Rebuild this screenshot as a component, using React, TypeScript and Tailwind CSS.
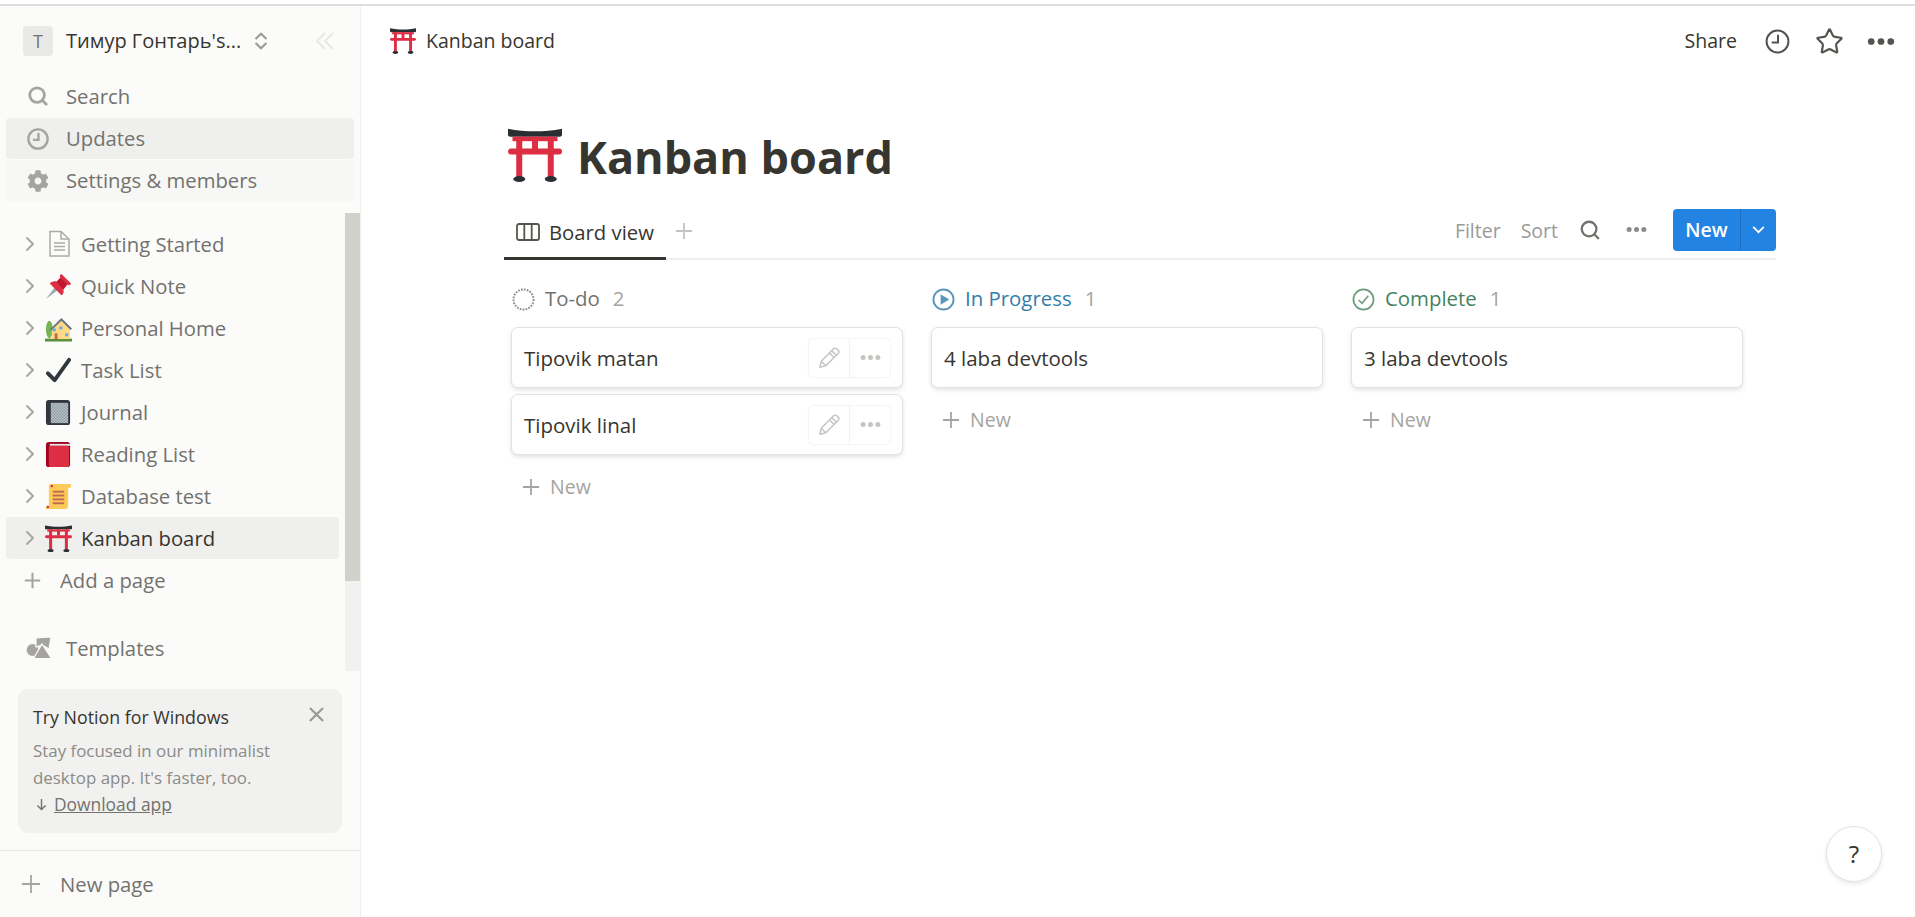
import React from 'react';
import { ChevronRight, Search, Star } from 'lucide-react';
import { FaCog } from 'react-icons/fa';

const Torii = ({ className }: { className: string }) => (
  <svg viewBox="0 0 36 36" className={className}>
    <path d="M0 0.500C6 1.800 12 2.200 18 2.200S30 1.800 36 0.500V4.500C36 5.200 35.500 5.800 34.500 5.800H1.500C0.500 5.800 0 5.200 0 4.500Z" fill="#292f33" />
    <rect x="5.500" y="5.800" width="4" height="27" fill="#dd2e44" />
    <rect x="26.500" y="5.800" width="4" height="27" fill="#dd2e44" />
    <rect x="16" y="5.800" width="4" height="8.500" fill="#dd2e44" />
    <rect x="3" y="5.800" width="30" height="3" fill="#dd2e44" />
    <rect x="0" y="13.700" width="36" height="3.900" rx="1.950" fill="#dd2e44" />
    <ellipse cx="7.500" cy="34" rx="4" ry="2" fill="#292f33" />
    <ellipse cx="28.500" cy="34" rx="4" ry="2" fill="#292f33" />
  </svg>
);

const DocIcon = () => (
  <svg viewBox="0 0 26 28" className="w-[26px] h-[28px]" fill="none" stroke="#aaaaa6" strokeWidth="1.500">
    <path d="M4 1.500H15L23 9V26H4Z" />
    <path d="M15 1.500V9H23M8 13H19M8 16.500H19M8 20H19" />
  </svg>
);

const PinIcon = () => (
  <svg viewBox="0 0 28 28" className="w-[27px] h-[27px]">
    <path d="M1 27L10 15L13 18Z" fill="#99aab5" />
    <path d="M17 1L27 11C26 13 24 13 23 12L19 17C20 20 19 22 17 23L5 11C7 9 9 8 12 9L16 5C15 4 15 2 17 1Z" fill="#dd2e44" />
    <path d="M16 5L23 12L19 17L12 9Z" fill="#be1931" />
  </svg>
);

const HouseIcon = () => (
  <svg viewBox="0 0 28 28" className="w-[27px] h-[27px]">
    <ellipse cx="4.500" cy="15" rx="3.500" ry="9" fill="#77b255" />
    <rect x="0" y="24.500" width="28" height="3" fill="#5c913b" />
    <path d="M7 14L17 5L26 14V25H7Z" fill="#ffd983" />
    <path d="M5 15L17 3L28 14L26.500 15.500L17 6L6.500 16Z" fill="#66757f" />
    <rect x="10" y="19" width="3" height="6" fill="#c1694f" />
    <rect x="8" y="14" width="3" height="3" fill="#55acee" />
    <rect x="15" y="12" width="3" height="3" fill="#55acee" />
    <rect x="21" y="19" width="3" height="3" fill="#55acee" />
  </svg>
);

const CheckIcon = () => (
  <svg viewBox="0 0 28 28" className="w-[27px] h-[27px]" fill="none">
    <path d="M3 17L10 24L25 3" stroke="#31373d" strokeWidth="4" strokeLinecap="round" strokeLinejoin="round" />
  </svg>
);

const NotebookIcon = () => (
  <svg viewBox="0 0 28 28" className="w-[27px] h-[27px]">
    <defs>
      <pattern id="checker" width="3" height="3" patternUnits="userSpaceOnUse">
        <rect width="3" height="3" fill="#e1e8ed" />
        <rect width="1.500" height="1.500" fill="#66757f" />
        <rect x="1.500" y="1.500" width="1.500" height="1.500" fill="#66757f" />
      </pattern>
    </defs>
    <rect x="1" y="1" width="25" height="26" rx="3" fill="#31373d" />
    <rect x="6" y="4" width="18" height="21" fill="url(#checker)" />
  </svg>
);

const BookIcon = () => (
  <svg viewBox="0 0 28 28" className="w-[27px] h-[27px]">
    <rect x="1" y="1" width="25" height="26" rx="3" fill="#a0041e" />
    <rect x="5" y="3" width="21" height="2" fill="#e1e8ed" />
    <rect x="4" y="5" width="21" height="22" rx="2" fill="#dd2e44" />
  </svg>
);

const ScrollIcon = () => (
  <svg viewBox="0 0 28 28" className="w-[27px] h-[27px]">
    <path d="M6 1H26C27.500 1 27.500 5 26 5H24V24C24 26 22 27 20 27H2C0.500 27 0.500 23.500 2 23.500H4V4C4 2 5 1 6 1Z" fill="#fdcb58" />
    <rect x="8" y="8" width="12" height="2" fill="#c1694f" />
    <rect x="8" y="12" width="12" height="2" fill="#c1694f" />
    <rect x="8" y="16" width="12" height="2" fill="#c1694f" />
    <rect x="8" y="20" width="12" height="2" fill="#c1694f" />
    <circle cx="7" cy="3" r="1.300" fill="#dd2e44" />
    <circle cx="3" cy="25" r="1.300" fill="#dd2e44" />
  </svg>
);

const PlusIcon = ({ className, color = '#a5a4a0', width = 2.2 }: { className: string; color?: string; width?: number }) => (
  <svg viewBox="0 0 20 20" className={className} fill="none" stroke={color} strokeWidth={width}>
    <path d="M10 1V19M1 10H19" />
  </svg>
);

const Dots = ({ className, color }: { className: string; color: string }) => (
  <svg viewBox="0 0 20 6" className={className} fill={color}>
    <circle cx="3" cy="3" r="2.400" />
    <circle cx="10" cy="3" r="2.400" />
    <circle cx="17" cy="3" r="2.400" />
  </svg>
);

const ClockIcon = ({ className, color, width }: { className: string; color: string; width: number }) => (
  <svg viewBox="0 0 24 24" className={className} fill="none" stroke={color} strokeWidth={width}>
    <circle cx="12" cy="12" r="10.500" />
    <path d="M12.500 5.500V13H6.500" />
  </svg>
);

const PencilIcon = () => (
  <svg viewBox="0 0 24 24" className="w-[22px] h-[22px]" fill="none" stroke="#c4c4c1" strokeWidth="1.600" strokeLinejoin="round">
    <path d="M2 22L3.500 15.500L17 2C18 1 19.500 1 20.500 2L22 3.500C23 4.500 23 6 22 7L8.500 20.500Z" />
    <path d="M3.500 15.500L8.500 20.500M15 4L20 9M12.500 6.500L17.500 11.500" />
  </svg>
);

const TemplatesIcon = () => (
  <svg viewBox="0 0 26 22" className="w-[26px] h-[22px]" fill="#a5a4a0" stroke="#fbfbfa" strokeWidth="1.200">
    <circle cx="6.500" cy="13" r="6.500" />
    <path d="M10 1L25 0L23 12L16 8L10 10Z" />
    <path d="M16 7L25.500 21.500H7.500Z" />
  </svg>
);

const pages = [
  { name: 'Getting Started', icon: <DocIcon /> },
  { name: 'Quick Note', icon: <PinIcon /> },
  { name: 'Personal Home', icon: <HouseIcon /> },
  { name: 'Task List', icon: <CheckIcon /> },
  { name: 'Journal', icon: <NotebookIcon /> },
  { name: 'Reading List', icon: <BookIcon /> },
  { name: 'Database test', icon: <ScrollIcon /> },
  { name: 'Kanban board', icon: <Torii className="w-[27px] h-[27px]" />, active: true },
];

function Sidebar() {
  return (
    <aside className="w-[360px] shrink-0 h-full flex flex-col bg-[#fbfbfa] text-[20.300px] font-medium text-[#73726e]">
      <div className="h-[70px] shrink-0 flex items-center pl-[23px]">
        <div className="w-[30px] h-[30px] rounded-[4px] bg-[#e9e9e7] flex items-center justify-center text-[18px] text-[#73726e] font-normal">T</div>
        <span className="ml-[13px] w-[186px] text-[20px] text-[#37352f] whitespace-nowrap">Тимур Гонтарь's...</span>
        <svg viewBox="0 0 14 18" className="ml-[2px] w-[14px] h-[18px]" fill="none" stroke="#9b9a97" strokeWidth="2.200">
          <path d="M1.500 7L7 1.800L12.500 7M1.500 11L7 16.200L12.500 11" />
        </svg>
        <svg viewBox="0 0 20 18" className="ml-[47px] w-[20px] h-[18px]" fill="none" stroke="#e6e6e3" strokeWidth="1.800">
          <path d="M10 1L2 9L10 17M18 1L10 9L18 17" />
        </svg>
      </div>
      <div className="h-[42px] pb-[2px] shrink-0 flex items-center pl-[27px] gap-[17px]">
        <Search className="w-[22px] h-[22px] text-[#a5a4a0]" strokeWidth={3} />
        <span>Search</span>
      </div>
      <div className="h-[41px] shrink-0 mx-[6px] flex items-center pl-[21px] gap-[17px] rounded-[4px] bg-[#efefee]">
        <ClockIcon className="w-[22px] h-[22px]" color="#a5a4a0" width={2.600} />
        <span>Updates</span>
      </div>
      <div className="h-[41px] mt-[1px] mb-[1px] shrink-0 mx-[6px] flex items-center pl-[21px] gap-[17px] rounded-[4px] bg-[#f7f7f5]">
        <FaCog className="w-[22px] h-[22px] text-[#a5a4a0]" />
        <span>Settings &amp; members</span>
      </div>

      <div className="mt-[11px] h-[458px] shrink-0 flex">
        <div className="flex-1 pt-[10px]">
          {pages.map((p) => (
            <div
              key={p.name}
              className={`h-[42px] flex items-center mx-[6px] rounded-[4px] pl-[12px] ${p.active ? 'bg-[#efefee] text-[#37352f]' : ''}`}
            >
              <ChevronRight className="w-[24px] h-[24px] text-[#a5a4a0] mr-[3px]" strokeWidth={1.800} />
              <span className="w-[27px] flex justify-center">{p.icon}</span>
              <span className="ml-[9px] whitespace-nowrap">{p.name}</span>
            </div>
          ))}
          <div className="h-[42px] flex items-center pl-[24px]">
            <PlusIcon className="w-[17px] h-[17px]" color="#a5a4a0" width={2.400} />
            <span className="ml-[19px]">Add a page</span>
          </div>
          <div className="h-[42px] mt-[26px] flex items-center pl-[26px]">
            <TemplatesIcon />
            <span className="ml-[14px]">Templates</span>
          </div>
        </div>
        <div className="w-[15px] flex flex-col bg-[#f1f1ef]">
          <div className="h-[368px] bg-[#d0d0cc]" />
        </div>
      </div>

      <div className="mt-[18px] mx-[18px] h-[144px] shrink-0 rounded-[10px] bg-[#f1f1ef] pl-[15px] pr-[15px] pt-[14px] relative">
        <div className="text-[#37352f] text-[17.800px] font-medium leading-[28px]">Try Notion for Windows</div>
        <svg viewBox="0 0 16 16" className="absolute top-[18px] right-[18px] w-[15px] h-[15px]" fill="none" stroke="#9b9a97" strokeWidth="2.400">
          <path d="M1 1L15 15M15 1L1 15" />
        </svg>
        <div className="text-[#8c8b87] text-[16.900px] font-normal leading-[27px] mt-[6px] whitespace-nowrap">
          <div>Stay focused in our minimalist</div>
          <div>desktop app. It's faster, too.</div>
          <div className="text-[#73726e] flex items-center">
            <svg viewBox="0 0 12 14" className="ml-[3px] mr-[7px] w-[11px] h-[13px]" fill="none" stroke="#73726e" strokeWidth="1.500">
              <path d="M6 1V12.500M1.500 8L6 12.500L10.500 8" />
            </svg>
            <span className="underline text-[17.400px]">Download app</span>
          </div>
        </div>
      </div>

      <div className="mt-[17px] h-[66px] shrink-0 border-t border-[#e9e9e7] box-content flex items-center pl-[21px]">
        <PlusIcon className="w-[20px] h-[20px]" color="#a5a4a0" width={1.800} />
        <span className="ml-[19px]">New page</span>
      </div>
    </aside>
  );
}

function TopBar() {
  return (
    <header className="h-[70px] shrink-0 flex items-center pl-[29px] pr-[20px] text-[#37352f] text-[19.500px]">
      <Torii className="w-[26px] h-[26px]" />
      <span className="ml-[10px]">Kanban board</span>
      <div className="ml-auto flex items-center">
        <span>Share</span>
        <ClockIcon className="ml-[28px] w-[25px] h-[25px]" color="#55534e" width={1.900} />
        <Star className="ml-[25px] w-[29px] h-[29px] text-[#55534e]" strokeWidth={1.800} />
        <Dots className="ml-[23px] w-[28px] h-[9px]" color="#55534e" />
      </div>
    </header>
  );
}

function Card({ title, actions }: { title: string; actions?: boolean }) {
  return (
    <div className="h-[61px] rounded-[7px] bg-white border border-[#e3e3e1] shadow-[0_2px_4px_rgba(15,15,15,0.12)] flex items-center pl-[12px] pr-[12px] text-[20.500px] font-medium text-[#37352f]">
      <span className="pt-[2px]">{title}</span>
      {actions && (
        <div className="ml-auto h-[38px] w-[81px] flex rounded-[4px] bg-white shadow-[0_0_2px_rgba(15,15,15,0.15)]">
          <div className="w-[41px] flex items-center justify-center border-r border-[#f1f1ef]">
            <PencilIcon />
          </div>
          <div className="flex-1 flex items-center justify-center">
            <Dots className="w-[21px] h-[7px]" color="#c4c4c1" />
          </div>
        </div>
      )}
    </div>
  );
}

function Column({
  icon,
  name,
  color,
  count,
  cards,
  actions,
}: {
  icon: React.ReactNode;
  name: string;
  color: string;
  count: number;
  cards: string[];
  actions?: boolean;
}) {
  return (
    <section className="w-[392px]">
      <div className="h-[26px] flex items-center pl-[1px] text-[20.400px] font-medium">
        {icon}
        <span className={`ml-[10px] pb-[2px] ${color}`}>{name}</span>
        <span className="ml-[13px] pb-[2px] font-normal text-[#a5a4a0]">{count}</span>
      </div>
      <div className="mt-[15px] flex flex-col gap-[6px]">
        {cards.map((c) => (
          <Card key={c} title={c} actions={actions} />
        ))}
      </div>
      <div className="h-[42px] mt-[11px] flex items-center pl-[11px] text-[19.500px] text-[#a5a4a0]">
        <PlusIcon className="w-[18px] h-[18px]" color="#a5a4a0" width={2} />
        <span className="ml-[10px]">New</span>
      </div>
    </section>
  );
}

export default function App() {
  return (
    <div className="h-[917px] w-full overflow-hidden flex flex-col bg-white font-['Open_Sans',sans-serif]">
      <div className="h-[6px] shrink-0 bg-white border-b-2 border-[#dedede]" />
      <div className="flex-1 min-h-0 flex relative">
        <Sidebar />
        <main className="flex-1 min-w-0 flex flex-col border-l border-[#f0f0ee]">
          <TopBar />
          <div className="ml-[143px] w-[1272px]">
            <div className="mt-[53px] h-[55px] flex items-center">
              <Torii className="w-[56px] h-[54px] ml-[3px] mb-[4px]" />
              <h1 className="ml-[14px] text-[45px] font-bold text-[#37352f] whitespace-nowrap">Kanban board</h1>
            </div>
            <div className="mt-[18px] h-[58px] flex items-end border-b-2 border-[#ededec]">
              <div className="h-[58px] w-[162px] -mb-[2px] flex items-center pt-[5px] pl-[12px] border-b-[3px] border-[#37352f] text-[20.300px] font-medium text-[#37352f]">
                <svg viewBox="0 0 24 18" className="w-[24px] h-[18px]" fill="none" stroke="#55534e" strokeWidth="1.800">
                  <rect x="1" y="1" width="22" height="16" rx="2" />
                  <path d="M8.300 1V17M15.700 1V17" />
                </svg>
                <span className="ml-[9px]">Board view</span>
              </div>
              <div className="h-[58px] pt-[3px] flex items-center ml-[9px]">
                <PlusIcon className="w-[18px] h-[18px]" color="#c4c4c1" width={2} />
              </div>
              <div className="ml-auto h-[55px] mb-[1px] flex items-center text-[19.500px] text-[#9b9a97]">
                <span className="pt-[2px]">Filter</span>
                <span className="ml-[20px] pt-[2px]">Sort</span>
                <Search className="ml-[21px] w-[22px] h-[22px] text-[#73726e]" strokeWidth={2.500} />
                <Dots className="ml-[25px] w-[21px] h-[7px]" color="#8c8b87" />
                <div className="ml-[26px] h-[42px] w-[103px] flex rounded-[4px] bg-[#2383e2] text-white font-semibold">
                  <div className="w-[68px] flex items-center justify-center border-r border-[#1b6fc2]">New</div>
                  <div className="flex-1 flex items-center justify-center">
                    <svg viewBox="0 0 14 9" className="w-[13px] h-[8px]" fill="none" stroke="white" strokeWidth="2">
                      <path d="M1 1L7 7L13 1" />
                    </svg>
                  </div>
                </div>
              </div>
            </div>
            <div className="ml-[7px] mt-[26px] flex gap-[28px]">
              <Column
                name="To-do"
                color="text-[#73726e]"
                count={2}
                actions
                cards={['Tipovik matan', 'Tipovik linal']}
                icon={
                  <svg viewBox="0 0 24 24" className="w-[23px] h-[23px]" fill="none" stroke="#8c8b87" strokeWidth="2" strokeDasharray="1.800 1.300">
                    <circle cx="12" cy="12" r="10.500" />
                  </svg>
                }
              />
              <Column
                name="In Progress"
                color="text-[#337ea9]"
                count={1}
                cards={['4 laba devtools']}
                icon={
                  <svg viewBox="0 0 24 24" className="w-[23px] h-[23px]" fill="none" stroke="#5b97bd" strokeWidth="2">
                    <circle cx="12" cy="12" r="10.500" />
                    <path d="M9 6.500L18 12L9 17.500Z" fill="#5b97bd" stroke="none" />
                  </svg>
                }
              />
              <Column
                name="Complete"
                color="text-[#448361]"
                count={1}
                cards={['3 laba devtools']}
                icon={
                  <svg viewBox="0 0 24 24" className="w-[23px] h-[23px]" fill="none" stroke="#6c9b7d" strokeWidth="1.800">
                    <circle cx="12" cy="12" r="10.500" />
                    <path d="M7 12.500L10.500 16L17 8" strokeWidth="1.600" />
                  </svg>
                }
              />
            </div>
          </div>
        </main>
        <div className="absolute left-[1826px] top-[820px] w-[56px] h-[56px] rounded-full bg-white border border-[#e3e3e1] shadow-[0_2px_4px_rgba(15,15,15,0.1)] flex items-center justify-center text-[24px] text-[#37352f]">
          ?
        </div>
      </div>
    </div>
  );
}
